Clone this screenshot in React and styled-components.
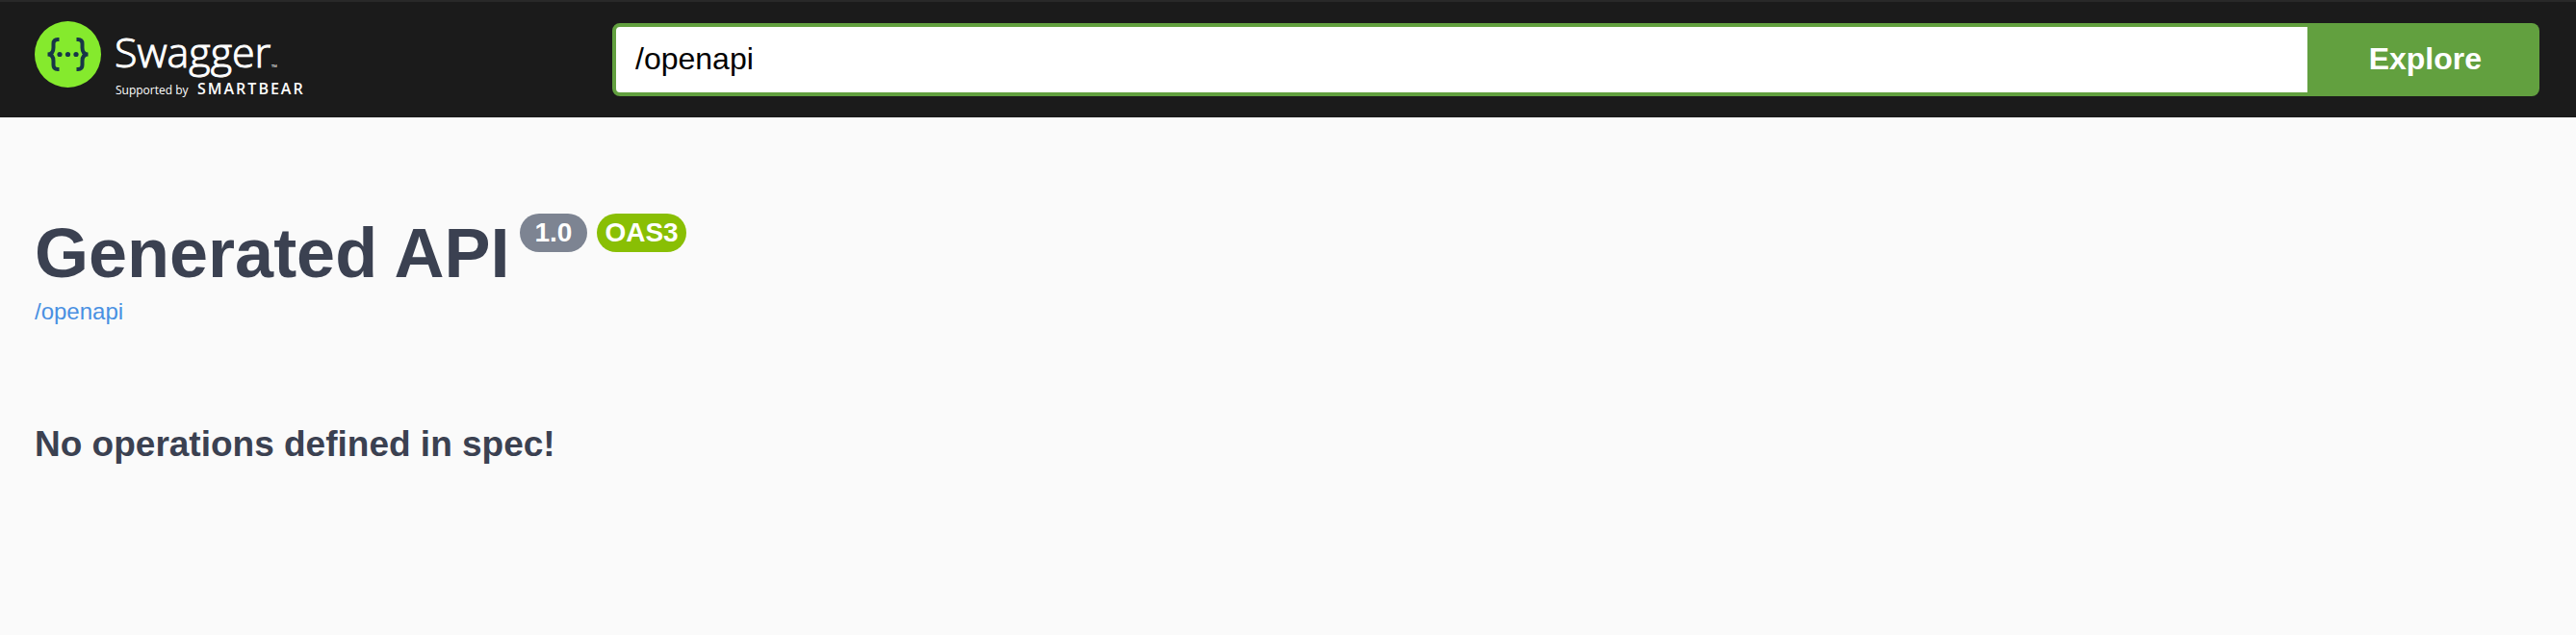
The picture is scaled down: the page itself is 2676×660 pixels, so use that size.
import React, { useState } from "react";
import styled, { createGlobalStyle } from "styled-components";

const GlobalStyle = createGlobalStyle`
  *, *::before, *::after { box-sizing: border-box; }
  html { background: #fafafa; }
  body {
    margin: 0;
    background: #fafafa;
    color: #3b4151;
    font-family: "Liberation Sans", Arial, Helvetica, sans-serif;
  }
`;

const Topbar = styled.header`
  display: flex;
  align-items: center;
  padding: 18px 38px 18px 36px;
  border-top: 2px solid #292929;
  background: #1b1b1b;
`;

const LogoLink = styled.a`
  flex: 0 0 600px;
  display: flex;
`;

const LogoImage = styled.svg`
  display: block;
  width: 284px;
  height: 84px;
`;

const LogoText = styled.text`
  fill: #ffffff;
  font-family: "Open Sans", "Noto Sans", sans-serif;
  font-size: ${({ $size }) => $size}px;
  font-weight: ${({ $weight }) => $weight};
`;

const WordmarkText = styled(LogoText)`
  stroke: #ffffff;
  stroke-width: 1px;
`;

const SponsorText = styled(LogoText)`
  letter-spacing: 2px;
`;

const UrlForm = styled.form`
  flex: 1;
  display: flex;
  height: 76px;
  min-width: 0;
`;

const UrlInput = styled.input`
  flex: 1;
  min-width: 0;
  margin: 0;
  padding: 0 20px 2px;
  border: 4px solid #62a03f;
  border-radius: 8px 0 0 8px;
  outline: none;
  background: #ffffff;
  color: #000000;
  font-family: inherit;
  font-size: 32px;
`;

const ExploreButton = styled.button`
  padding: 0 60px 2px;
  border: 0;
  border-radius: 0 8px 8px 0;
  background: #62a03f;
  color: #ffffff;
  font-family: inherit;
  font-size: 32px;
  font-weight: 700;
  cursor: pointer;
`;

const Main = styled.main`
  padding: 100px 36px;
`;

const TitleRow = styled.div`
  display: flex;
  align-items: flex-start;
  gap: 10px;
  margin-bottom: 6px;
`;

const Title = styled.h1`
  margin: 0;
  font-size: 72px;
  line-height: 82px;
`;

const Badge = styled.span`
  padding: 0 ${({ $inset }) => $inset}px;
  border-radius: 20px;
  background: ${({ $color }) => $color};
  color: #ffffff;
  font-size: 28px;
  font-weight: 700;
  line-height: 40px;
`;

const SpecLink = styled.a`
  display: inline-block;
  color: #4990e2;
  font-size: 24px;
  line-height: 28px;
  text-decoration: none;
  vertical-align: top;
`;

const EmptyMessage = styled.h3`
  margin: 102px 0 0;
  font-size: 37px;
  line-height: 44px;
`;

function Logo() {
  return (
    <LogoImage viewBox="0 0 284 84" role="img" aria-label="Swagger, supported by SmartBear">
      <circle cx="34.5" cy="36.5" r="34.5" fill="#85ea2d" />
      <g fill="none" stroke="#173647" strokeWidth="4">
        <path d="M25.5 21 H24 Q19.5 21 19.5 25.5 V29.5 Q19.5 36.5 13.5 36.5 Q19.5 36.5 19.5 43.5 V47.5 Q19.5 52 24 52 H25.5" />
        <path d="M43.5 21 H45 Q49.5 21 49.5 25.5 V29.5 Q49.5 36.5 55.5 36.5 Q49.5 36.5 49.5 43.5 V47.5 Q49.5 52 45 52 H43.5" />
      </g>
      <g fill="#173647">
        <circle cx="26" cy="36.5" r="2.6" />
        <circle cx="34.5" cy="36.5" r="2.6" />
        <circle cx="43" cy="36.5" r="2.6" />
      </g>
      <WordmarkText x="83" y="50" $size={43} $weight={300}>Swagger</WordmarkText>
      <LogoText x="246" y="53" $size={8} $weight={400}>™</LogoText>
      <LogoText x="84" y="78" $size={12} $weight={400}>Supported by</LogoText>
      <SponsorText x="169" y="78" $size={16} $weight={600}>SMARTBEAR</SponsorText>
    </LogoImage>
  );
}

export default function App() {
  const [url, setUrl] = useState("/openapi");
  return (
    <>
      <GlobalStyle />
      <Topbar>
        <LogoLink href="#">
          <Logo />
        </LogoLink>
        <UrlForm onSubmit={(event) => event.preventDefault()}>
          <UrlInput
            type="text"
            aria-label="API definition URL"
            value={url}
            onChange={(event) => setUrl(event.target.value)}
          />
          <ExploreButton type="submit">Explore</ExploreButton>
        </UrlForm>
      </Topbar>
      <Main>
        <TitleRow>
          <Title>Generated API</Title>
          <Badge $color="#7d8492" $inset={16}>1.0</Badge>
          <Badge $color="#89bf04" $inset={8}>OAS3</Badge>
        </TitleRow>
        <SpecLink href="/openapi">/openapi</SpecLink>
        <EmptyMessage>No operations defined in spec!</EmptyMessage>
      </Main>
    </>
  );
}
